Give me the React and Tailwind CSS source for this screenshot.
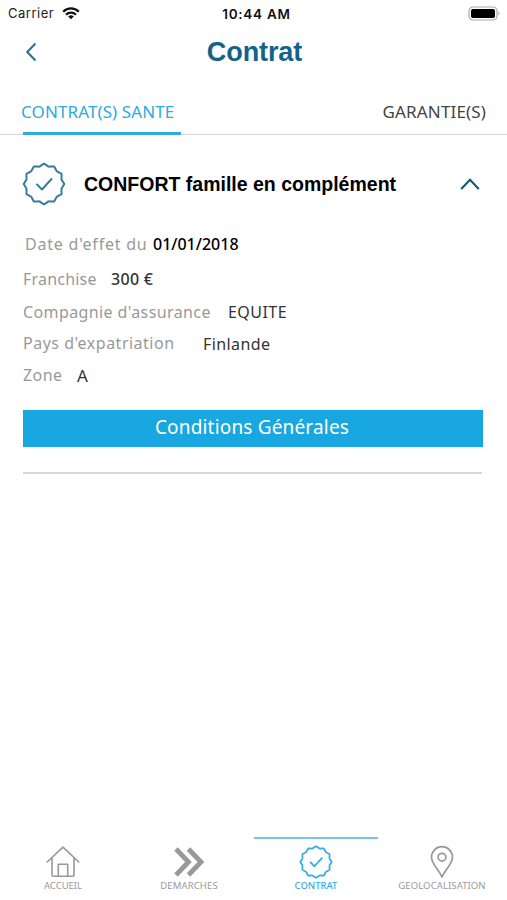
const DETAILS = [
  { label: "Date d'effet du", value: '01/01/2018', row: 'h-[35px] pl-[2px]', labelClass: 'w-[128px] tracking-[0.78px]', valueClass: 'text-black font-medium' },
  { label: 'Franchise', value: '300 €', row: 'h-[33px]', labelClass: 'w-[88px] tracking-[0.2px]', valueClass: 'text-[#333] font-medium tracking-[0.3px]' },
  { label: "Compagnie d'assurance", value: 'EQUITE', row: 'h-[32px]', labelClass: 'w-[205px] tracking-[0.4px]', valueClass: 'text-[#333] tracking-[0.45px]' },
  { label: "Pays d'expatriation", value: 'Finlande', row: 'h-[32px]', labelClass: 'w-[180px] tracking-[0.5px] -mt-px', valueClass: 'text-[#333] tracking-[0.4px]' },
  { label: 'Zone', value: 'A', row: 'h-[32px]', labelClass: 'w-[54px] tracking-[0.4px] -mt-px', valueClass: 'text-[#333] text-[17px]' },
];

// Twelve-pointed seal: each pair of points is joined by an inward curve
const sealPath = () => {
  const at = (r, deg) => {
    const a = (deg * Math.PI) / 180;
    return `${(22 + r * Math.cos(a)).toFixed(2)} ${(22 + r * Math.sin(a)).toFixed(2)}`;
  };
  let d = `M${at(20.3, -90)}`;
  for (let i = 0; i < 12; i++) {
    const start = -90 + i * 30;
    d += `L${at(18.6, start + 10)}Q${at(17.6, start + 15)} ${at(18.6, start + 20)}L${at(20.3, start + 30)}`;
  }
  return `${d}Z`;
};

function SealIcon({ className, strokeWidth }) {
  return (
    <svg className={className} viewBox="0 0 44 44" fill="none" stroke="currentColor" strokeWidth={strokeWidth} strokeLinejoin="round" strokeLinecap="round">
      <path d={sealPath()} />
      <path d="M15 22.5l5 5L29.5 17" />
    </svg>
  );
}

function HomeIcon() {
  return (
    <svg className="w-[34px] h-[34px]" viewBox="0 0 34 34" fill="none" stroke="currentColor" strokeWidth="1.6" strokeLinejoin="round" strokeLinecap="round">
      <path d="M1.2 17L17 2.200l15.800 14.800M6 13v16.800a1.500 1.500 0 001.500 1.500h19a1.500 1.500 0 001.500-1.500V13" />
      <path d="M12.300 31.300V19.300h9.400v12" />
    </svg>
  );
}

function ForwardIcon() {
  return (
    <svg className="w-[34px] h-[34px]" viewBox="0 0 34 34" fill="none" stroke="currentColor" strokeWidth="4.800">
      <path d="M4 4l12.500 13L4 30M16.500 4L29 17 16.500 30" />
    </svg>
  );
}

function PinIcon() {
  return (
    <svg className="w-[34px] h-[34px]" viewBox="0 0 34 34" fill="none" stroke="currentColor" strokeWidth="1.7" strokeLinejoin="round">
      <path d="M17 32C13.5 24.5 6.5 18.5 6.5 12.2a10.5 10.5 0 0121 0C27.500 18.500 20.500 24.500 17 32z" />
      <circle cx="17" cy="12.200" r="3.900" />
    </svg>
  );
}

function NavItem({ label, active, width, labelClass, children }) {
  return (
    <div className={`${width} h-[63px] flex flex-col items-center border-t-2 pt-[6px] ${active ? 'border-[#72c4e8] text-[#36aee0]' : 'border-transparent text-[#999]'}`}>
      <div className="h-[34px] flex items-center">{children}</div>
      <span className={`text-[9.5px] leading-[13px] whitespace-nowrap ${labelClass}`}>{label}</span>
    </div>
  );
}

function StatusBar() {
  return (
    <div className="h-[27px] grid grid-cols-3 items-center pl-[8px] pr-[6px] font-['Inter',sans-serif] text-[13px] text-[#222]">
      <div className="flex items-center gap-[7px]">
        <span className="w-[47px] tracking-[0.5px] pt-px">Carrier</span>
        <svg className="w-[18px] h-[13px]" viewBox="0 0 18 13" fill="none" stroke="#111" strokeWidth="2.3">
          <path d="M1.200 4.700a11 11 0 0115.600 0M4 7.700a7 7 0 0110 0" />
          <path d="M9 12.300L6.200 9.500a4 4 0 015.600 0z" fill="#111" stroke="none" />
        </svg>
      </div>
      <span className="pl-[4px] pt-px text-center font-semibold text-[13.5px] tracking-[0.75px] whitespace-nowrap text-[#111]">10:44 AM</span>
      <svg className="w-[33px] h-[15px] justify-self-end" viewBox="0 0 33 15">
        <rect x="1" y="1" width="28" height="13" rx="4" fill="#fff" stroke="#aaa" strokeWidth="1.200" />
        <rect x="3" y="3" width="24" height="9" rx="1.800" fill="#000" />
        <path d="M30.500 5.500q2 2 0 4z" fill="#999" />
      </svg>
    </div>
  );
}

export default function App() {
  return (
    <div className="w-[507px] h-[900px] bg-white flex flex-col overflow-hidden font-['Noto_Sans',sans-serif]">
      <StatusBar />

      <header className="h-[50px] grid grid-cols-[60px_1fr_60px] items-center">
        <svg className="ml-[25px] w-[13px] h-[20px]" viewBox="0 0 13 20" fill="none" stroke="#27708f" strokeWidth="2">
          <path d="M10.500 1.500L2.200 10l8.300 8.500" />
        </svg>
        <h1 className="pl-[2px] text-center font-['Liberation_Sans',sans-serif] font-bold text-[27px] leading-[50px] tracking-[-0.1px] text-[#12638a]">Contrat</h1>
      </header>

      <nav className="h-[58px] shrink-0 flex justify-between border-b border-[#d5d5d5] pl-[23px] pr-[21px] text-[17px]">
        <div className="w-[158px] h-[58px] shrink-0 flex items-center pt-[15px] border-b-[3px] border-[#2caae1] text-[#2caae1]">
          <span className="-ml-[2px] whitespace-nowrap tracking-[0.1px]">CONTRAT(S) SANTE</span>
        </div>
        <div className="h-[55px] flex items-center pt-[15px] tracking-[0.15px] text-[#444]">GARANTIE(S)</div>
      </nav>

      <main className="flex-1 px-[23px]">
        <div className="h-[93px] pt-[5px] flex items-center">
          <SealIcon className="w-[44px] h-[44px] -ml-[1px] text-[#357d9e]" strokeWidth={2} />
          <h2 className="ml-[18px] pt-[2px] flex-1 font-['Liberation_Sans',sans-serif] font-bold text-[19.5px] text-black whitespace-nowrap">CONFORT famille en complément</h2>
          <svg className="mr-[4px] w-[20px] h-[12px]" viewBox="0 0 20 12" fill="none" stroke="#155a76" strokeWidth="2.200">
            <path d="M1.200 11L10 1.800 18.800 11" />
          </svg>
        </div>

        <div className="text-[16px] leading-[32px]">
          {DETAILS.map((item) => (
            <div key={item.label} className={`flex items-start whitespace-nowrap ${item.row}`}>
              <span className={`text-[#999] ${item.labelClass}`}>{item.label}</span>
              <span className={item.valueClass}>{item.value}</span>
            </div>
          ))}
        </div>

        <button className="mt-[18px] w-[460px] h-[37px] pb-[3px] pr-[2px] flex items-center justify-center bg-[#19a7e1] text-white text-[19px]">
          <span className="whitespace-nowrap tracking-[0.17px]">Conditions Générales</span>
        </button>
        <div className="mt-[25px] h-[2px] w-[459px] bg-[#d6d6d6]" />
      </main>

      <footer className="h-[63px] shrink-0 flex">
        <NavItem label="ACCUEIL" width="w-[126px]" labelClass=""><HomeIcon /></NavItem>
        <NavItem label="DEMARCHES" width="w-[126px]" labelClass="tracking-[0.15px]"><ForwardIcon /></NavItem>
        <div className="w-[2px]" />
        <NavItem label="CONTRAT" width="w-[124px]" labelClass="font-medium" active>
          <SealIcon className="w-[34px] h-[34px]" strokeWidth={2.300} />
        </NavItem>
        <NavItem label="GEOLOCALISATION" width="w-[128px]" labelClass="tracking-[0.1px]"><PinIcon /></NavItem>
      </footer>
    </div>
  );
}
